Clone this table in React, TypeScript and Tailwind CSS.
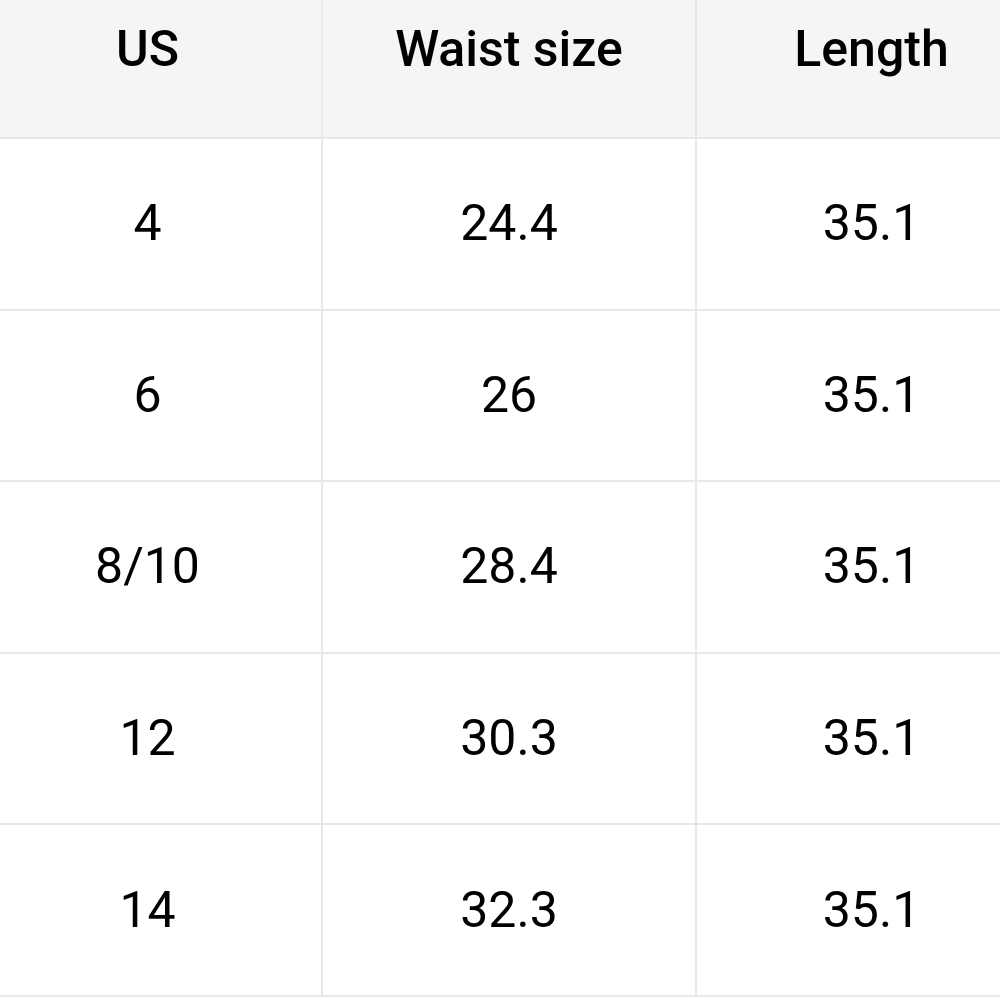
import React from 'react';

const rows: [string, string, string][] = [
  ['4', '24.4', '35.1'],
  ['6', '26', '35.1'],
  ['8/10', '28.4', '35.1'],
  ['12', '30.3', '35.1'],
  ['14', '32.3', '35.1'],
];

const headers = ['US', 'Waist size', 'Length'];

const App: React.FC = () => {
  return (
    <div className="w-[1000px] h-[997px] overflow-hidden bg-white" style={{ fontFamily: 'Roboto, "Noto Sans", sans-serif' }}>
      <div className="-ml-[26px] w-[1074px] grid grid-cols-[349px_374px_351px] text-[50px] text-black">
        {headers.map((h) => (
          <div
            key={h}
            className="h-[139px] pb-[38px] flex items-center justify-center bg-[#f5f5f5] border-r-2 border-b-2 border-[#e8e8e8] font-medium"
          >
            {h}
          </div>
        ))}
        {rows.map((row, i) =>
          row.map((cell, j) => (
            <div
              key={`${i}-${j}`}
              className="h-[171.6px] flex items-center justify-center border-r-2 border-b-2 border-[#e8e8e8]"
            >
              {cell}
            </div>
          ))
        )}
      </div>
    </div>
  );
};

export default App;
